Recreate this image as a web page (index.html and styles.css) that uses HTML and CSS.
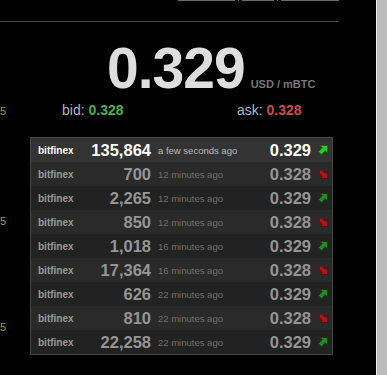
FILE: index.html
```html
<!DOCTYPE html>
<html lang="en">
<head>
    <meta charset="UTF-8">
    <meta name="viewport" content="width=device-width, initial-scale=1.0">
    <title>Ticker</title>
    <link rel="stylesheet" href="styles.css">
</head>
<body>
    <div class="page">
        <div class="container">
            <div class="topbar">
                <span class="nav-link nav-a"></span>
                <span class="nav-sep"></span>
                <span class="nav-link nav-b"></span>
                <span class="nav-sep"></span>
                <span class="nav-link nav-c"></span>
            </div>
            <div class="content">
                <div class="side">
                    <div class="side-item first">5</div>
                    <div class="side-item second">5</div>
                    <div class="side-item third">5</div>
                </div>
                <div class="main">
                    <div class="ticker">
                        <span class="price">0.329</span><span class="unit">USD / mBTC</span>
                    </div>
                    <div class="quotes">
                        <div class="quote bid">bid: <b>0.328</b></div>
                        <div class="quote ask">ask: <b>0.328</b></div>
                    </div>
                    <table class="trades">
                        <colgroup>
                            <col class="c-ex"><col class="c-amt"><col class="c-time"><col class="c-price"><col class="c-dir">
                        </colgroup>
                        <tbody id="rows"></tbody>
                    </table>
                </div>
            </div>
        </div>
        <div class="filler"></div>
        <div class="scrollbar"></div>
    </div>

    <script>
        const trades = [
            ['135,864', 'a few seconds ago', '0.329', 'up'],
            ['700', '12 minutes ago', '0.328', 'down'],
            ['2,265', '12 minutes ago', '0.329', 'up'],
            ['850', '12 minutes ago', '0.328', 'down'],
            ['1,018', '16 minutes ago', '0.329', 'up'],
            ['17,364', '16 minutes ago', '0.328', 'down'],
            ['626', '22 minutes ago', '0.329', 'up'],
            ['810', '22 minutes ago', '0.328', 'down'],
            ['22,258', '22 minutes ago', '0.329', 'up']
        ];

        // chunky diagonal arrows, same shape flipped for down
        const arrows = {
            up: '<polygon points="9.5,0.5 9.5,8 7.2,5.7 3.4,9.5 0.5,6.6 4.3,2.8 2,0.5" />',
            down: '<polygon points="9.5,9.5 9.5,2 7.2,4.3 3.4,0.5 0.5,3.4 4.3,7.2 2,9.5" />'
        };

        const tbody = document.getElementById('rows');
        trades.forEach(function (t, i) {
            const tr = document.createElement('tr');
            tr.className = i === 0 ? 'latest' : (i % 2 ? 'odd' : 'even');
            tr.innerHTML =
                '<td class="ex">bitfinex</td>' +
                '<td class="amt">' + t[0] + '</td>' +
                '<td class="time">' + t[1] + '</td>' +
                '<td class="px">' + t[2] + '</td>' +
                '<td class="dir"><svg class="arrow ' + t[3] + '" width="10" height="10" viewBox="0 0 10 10">' + arrows[t[3]] + '</svg></td>';
            tbody.appendChild(tr);
        });
    </script>
</body>
</html>
```

FILE: styles.css
```css
body {
    margin: 0;
    background-color: #000;
    font-family: "Liberation Sans", Arial, sans-serif;
}
.page {
    display: flex;
    height: 375px;
    overflow: hidden;
}
.container {
    width: 339px;
    flex-shrink: 0;
}
.filler {
    flex: 1;
}
.scrollbar {
    width: 10px;
    border-left: 1px solid #ececec;
    background-color: #bcbcbc;
}
.topbar {
    display: flex;
    height: 21px;
    padding-left: 178px;
    border-bottom: 1px solid #484848;
}
.nav-link {
    height: 0;
    border-top: 1px solid #6a6a6a;
}
.nav-a { width: 58px; }
.nav-b { width: 32px; }
.nav-c { width: 59px; }
.nav-sep {
    width: 8px;
    position: relative;
}
.nav-sep::after {
    content: "";
    position: absolute;
    left: 3px;
    top: 0;
    width: 1px;
    height: 1px;
    background-color: #6a8a3a;
}
.content {
    display: flex;
}
.side {
    width: 6px;
    flex-shrink: 0;
}
.side-item {
    height: 14px;
    line-height: 14px;
    font-size: 11px;
    color: #a99a36;
}
.side-item.first { margin-top: 82px; }
.side-item.second { margin-top: 96px; }
.side-item.third { margin-top: 92px; }
.main {
    flex: 1;
}
.ticker {
    margin-top: 18px;
    padding-left: 101px;
    height: 57px;
    line-height: 57px;
    white-space: nowrap;
}
.price {
    font-size: 57px;
    font-weight: bold;
    letter-spacing: -1px;
    color: #dedede;
}
.unit {
    margin-left: 6px;
    font-size: 11px;
    font-weight: bold;
    color: #777;
}
.quotes {
    display: flex;
    margin-top: 3px;
    height: 20px;
    line-height: 20px;
    font-size: 14px;
}
.quote {
    color: #aeb4c2;
}
.bid {
    padding-left: 56px;
    width: 175px;
}
.bid b { color: #4cb04c; }
.ask b { color: #cc4c4c; }
.trades {
    margin: 17px 0 0 24px;
    width: 303px;
    table-layout: fixed;
    border: 1px solid #444;
    border-spacing: 0;
}
.c-ex { width: 47px; }
.c-amt { width: 75px; }
.c-price { width: 60px; }
.c-dir { width: 17px; }
.trades td {
    height: 24px;
    padding: 0;
    white-space: nowrap;
    overflow: hidden;
}
.trades tr.odd td { background-color: #2a2a2a; }
.trades tr.even td { background-color: #222; }
.trades tr.latest td { background-color: #333; }
.trades td.ex {
    background-color: #000;
    padding-left: 7px;
    font-size: 10px;
    font-weight: bold;
    color: #9a9a9a;
}
.trades td.amt {
    text-align: right;
    padding-right: 2px;
    font-size: 16.5px;
    font-weight: bold;
    color: #959595;
}
.trades td.time {
    padding-left: 5px;
    font-size: 9.5px;
    color: #707070;
}
.trades td.px {
    text-align: right;
    padding-right: 4px;
    font-size: 16.5px;
    font-weight: bold;
    color: #959595;
}
.trades td.dir {
    padding-left: 3px;
}
.trades tr.latest td.ex,
.trades tr.latest td.amt,
.trades tr.latest td.px {
    color: #fff;
}
.trades tr.latest td.time {
    color: #bbb;
}
.arrow {
    display: block;
    stroke-width: 0.7;
    stroke-linejoin: round;
}
.arrow.up {
    fill: #1f8f1f;
    stroke: #0c3a0c;
}
.arrow.down {
    fill: #b01414;
    stroke: #4a0808;
}
.latest .arrow.up {
    fill: #22d022;
    stroke: #126012;
}
```
